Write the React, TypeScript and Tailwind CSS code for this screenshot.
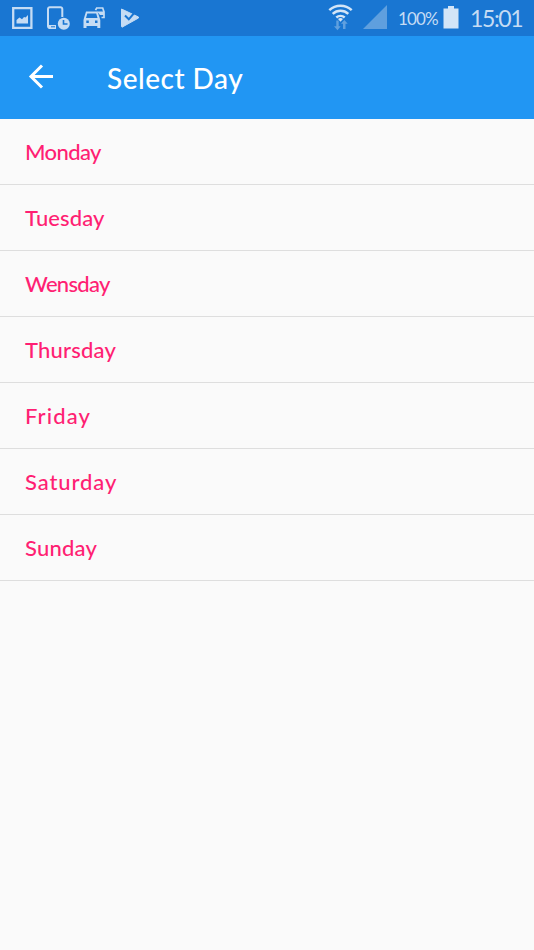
import type { ReactNode } from "react";

const days = [
  { name: "Monday", tracking: "tracking-[-0.6px]" },
  { name: "Tuesday", tracking: "tracking-[0.1px]" },
  { name: "Wensday", tracking: "tracking-[-0.7px]" },
  { name: "Thursday", tracking: "tracking-[0.2px]" },
  { name: "Friday", tracking: "tracking-[1.1px]" },
  { name: "Saturday", tracking: "tracking-[0.9px]" },
  { name: "Sunday", tracking: "tracking-[0.2px]" },
];

interface IconProps {
  className: string;
  viewBox: string;
  children: ReactNode;
}

function Icon({ className, viewBox, children }: IconProps) {
  return (
    <svg className={className} viewBox={viewBox} fill="none" aria-hidden="true">
      {children}
    </svg>
  );
}

function StatusBar() {
  return (
    <div className="flex h-9 items-center justify-between bg-[#1976d2] pl-3 pr-3 text-[#c5dcf4]">
      <div className="flex items-center">
        {/* Screenshot saved */}
        <Icon className="h-[22px] w-[21px]" viewBox="0 0 21 22">
          <path d="M1.2 1.2h18.2v19.6H1.2z" stroke="currentColor" strokeWidth="2.3" />
          <path d="M4.500 16.500v-3.500l3-2.500 2.500 1.800 2-2.300 1.500.500 2.500-2.500v8.500z" fill="currentColor" />
        </Icon>
        {/* Phone with clock */}
        <Icon className="ml-[14px] h-6 w-6" viewBox="0 0 24 24">
          <path d="M9 22H2.8A1.8 1.8 0 0 1 1 20.2V3A1.8 1.8 0 0 1 2.8 1.2H13.5A1.8 1.8 0 0 1 15.3 3v8" stroke="currentColor" strokeWidth="2" />
          <path d="M1 19h8v4H2z" fill="currentColor" />
          <path d="M4 20.8h4" stroke="#1976d2" strokeWidth="1" />
          <circle cx="16.8" cy="17.7" r="6" fill="currentColor" />
          <path d="M16.5 14v4h4" stroke="#1976d2" strokeWidth="1.6" />
        </Icon>
        {/* Driving */}
        <Icon className="ml-3 h-[22px] w-[22px]" viewBox="0 0 22 22">
          <path d="M12.500 3.200 13.700 1h6l1.300 4v5.500h-2.500" stroke="currentColor" strokeWidth="1.700" />
          <path d="M14 4.500h7v3.500h-4z" fill="currentColor" />
          <path
            d="M3 4.500h11.500l2.200 6.500.6 2v8h-3v-2H3.500v2H.5v-8l.500-2zM4.300 6.500 3 11h11.500l-1.300-4.500zM3.300 13.500v2.500h2.500v-2.500zm8.700 0v2.500h2.500v-2.500z"
            fill="currentColor"
            fillRule="evenodd"
          />
        </Icon>
        {/* Play with check */}
        <Icon className="ml-[15px] h-[22px] w-5" viewBox="0 0 20 22">
          <path d="M1.5 2 18.500 10v1L2 20.200 1.500 19z" fill="currentColor" stroke="currentColor" strokeLinejoin="round" />
          <path d="m5 8.500 3.800 3.800L15 5" stroke="#1976d2" strokeWidth="2" />
        </Icon>
      </div>

      <div className="flex items-center">
        {/* Wi-Fi with traffic arrows */}
        <Icon className="h-[26px] w-[26px] overflow-visible" viewBox="0 0 26 26">
          <path d="M1.300 5.200a16.500 16.500 0 0 1 22.400 0M4.700 8.900a11.500 11.500 0 0 1 15.600 0M8.300 12.500a6.500 6.500 0 0 1 8.400 0" stroke="#d3e5f7" strokeWidth="2.500" />
          <path d="M8.300 15.500h2.400v5.800h2L9.500 25.300 6 21.300h2.300zM15 24v-5.200h-2l3.400-3.900 3.300 3.900h-2.200V24z" fill="#60a0df" />
          <path d="m10 14 2.500 2.700L15 14a4 4 0 0 0-5 0z" fill="#d3e5f7" />
        </Icon>
        <Icon className="ml-[9px] h-6 w-6 -translate-y-px" viewBox="0 0 24 24">
          <path d="M24 0v24H0z" fill="#5f9fde" />
        </Icon>
        <span className="ml-[11px] w-10 text-[17px] leading-none whitespace-nowrap tracking-[-0.9px]">100%</span>
        <Icon className="ml-[5px] h-[23px] w-4 -translate-y-px" viewBox="0 0 16 23">
          <path d="M5 0h6v2.5h4.5V22.5H.5V2.5H5z" fill="#d3e5f7" />
        </Icon>
        <span className="ml-[11px] w-[52px] text-[23px] leading-none whitespace-nowrap tracking-[-1.4px]">15:01</span>
      </div>
    </div>
  );
}

export default function App() {
  return (
    <div className="min-h-[950px] bg-[#fafafa] font-['Lato','Open_Sans',sans-serif]">
      <StatusBar />

      <header className="flex h-[83px] items-center bg-[#2196f3] text-white">
        <button type="button" aria-label="Back" className="ml-7 h-[25px] w-[26px] -translate-y-px">
          <Icon className="h-[25px] w-[26px]" viewBox="0 0 26 25">
            <path d="M25 12.5H3M14 1.5l-11 11 11 11" stroke="currentColor" strokeWidth="3" />
          </Icon>
        </button>
        <h1 className="ml-[53px] text-[28px] leading-8 font-medium whitespace-nowrap tracking-[0.5px]">Select Day</h1>
      </header>

      <ul>
        {days.map((day) => (
          <li key={day.name} className="flex h-[66px] items-center border-b border-[#dedede] pl-[25px] text-[22px] font-medium text-[#ff1f73]">
            <span className={day.tracking}>{day.name}</span>
          </li>
        ))}
      </ul>
    </div>
  );
}
